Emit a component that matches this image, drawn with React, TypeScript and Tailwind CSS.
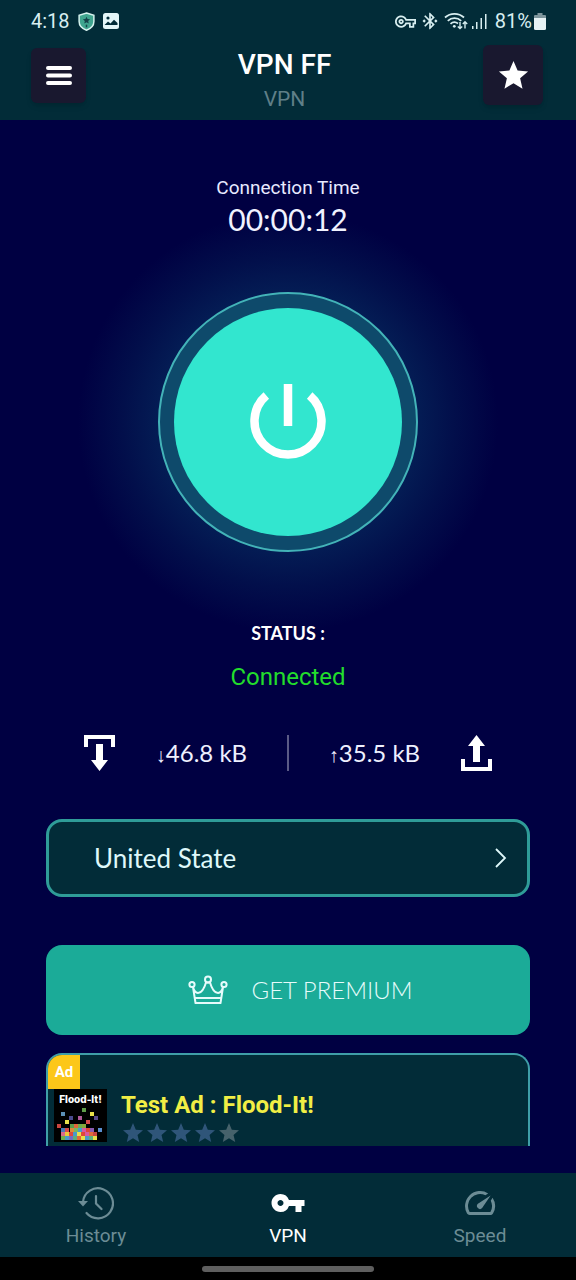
import { MdBluetoothConnected, MdOutlineVpnKey, MdSpeed, MdStar, MdVpnKey } from "react-icons/md";
import { clsx } from "clsx";

const floodPixels: [number, number, string][] = [
  [28, 19, "#5f9e4a"], [7, 23, "#5b8fb5"], [36, 23, "#e8e04a"], [15, 27, "#4a4a8c"], [24, 27, "#b05a9a"],
  [40, 27, "#5a4a8c"], [11, 31, "#e8e04a"], [32, 31, "#d84a4a"], [3, 35, "#c8453f"], [16, 35, "#5f9e4a"],
  [20, 35, "#e0683a"], [24, 35, "#6fae4a"], [28, 35, "#8aa83a"], [7, 39, "#4a7ab8"], [11, 39, "#d84a4a"],
  [16, 39, "#e08a3a"], [20, 39, "#7ab85a"], [24, 39, "#4a9ac8"], [28, 39, "#d85aa0"], [32, 39, "#e0483a"],
  [36, 39, "#8a5ab0"], [44, 39, "#5b8fd0"], [7, 43, "#d86a8a"], [11, 43, "#e8c83a"], [15, 43, "#e0483a"],
  [19, 43, "#4a9ac8"], [23, 43, "#e8e04a"], [27, 43, "#e0483a"], [31, 43, "#d85aa0"], [35, 43, "#e06a3a"],
  [39, 43, "#c8453f"], [7, 47, "#6fae4a"], [11, 47, "#4a9ac8"], [15, 47, "#7a6ac0"], [19, 47, "#5fae7a"],
  [23, 47, "#e0683a"], [27, 47, "#e8e04a"], [31, 47, "#4a9ac8"], [35, 47, "#5fae7a"], [39, 47, "#e8e04a"],
];

function ShieldIcon() {
  return (
    <svg width="17" height="19" viewBox="0 0 16 18">
      <path d="M8 1 15 3.2V9c0 4-3 6.8-7 8.3C4 15.8 1 13 1 9V3.2Z" fill="#3fa58f" stroke="#d5f2ee" strokeWidth="1.4" />
      <path d="m8 4.5 1 2.2 2.4.2-1.8 1.6.5 2.4L8 9.7l-2.1 1.2.5-2.4-1.8-1.6 2.4-.2Z" fill="#14434a" />
      <path d="M7.3 12h1.4v2.5H7.3z" fill="#14434a" />
    </svg>
  );
}

function PictureIcon() {
  return (
    <svg width="16" height="16" viewBox="0 0 16 16">
      <rect width="16" height="16" rx="2.5" fill="#e4f6f8" />
      <circle cx="5" cy="5" r="1.6" fill="#022c38" />
      <path d="M1.5 12 5 8.5 7.5 10.5 11 6.8 14.5 10v2Z" fill="#022c38" />
    </svg>
  );
}

function WifiIcon() {
  return (
    <svg width="24" height="18" viewBox="0 0 24 18" fill="none" stroke="#d8eef0" strokeWidth="1.8">
      <path d="M1 5.5a14 14 0 0 1 19 0M3.8 8.8a10 10 0 0 1 13.4 0M6.5 11.8a6 6 0 0 1 7.5-.4" />
      <circle cx="10.3" cy="14.3" r="1.4" fill="#d8eef0" stroke="none" />
      <path d="M16 10v6.5M13.8 14.4l2.2 2.2 2.2-2.2M21 16.5V10M18.8 12l2.2-2.2 2.2 2.2" strokeWidth="1.4" />
    </svg>
  );
}

function SignalIcon() {
  return (
    <svg width="15" height="16" viewBox="0 0 15 16" fill="#d8eef0">
      <path d="M0 13h1.5v3H0zM4 9h1.5v7H4zM8.5 5H10v11H8.5zM13 1h1.5v15H13z" />
    </svg>
  );
}

function BatteryIcon() {
  return (
    <svg width="12" height="17" viewBox="0 0 12 17">
      <path d="M3.5 0h5v2H11a1 1 0 0 1 1 1v2H0V3a1 1 0 0 1 1-1h2.5z" fill="#7e959c" />
      <path d="M0 5h12v10.5a1.5 1.5 0 0 1-1.5 1.5h-9A1.5 1.5 0 0 1 0 15.5z" fill="#e8f3f5" />
    </svg>
  );
}

function StatusBar() {
  return (
    <div className="flex h-10 items-center justify-between pl-[31px] pr-[30px] pt-0.5 text-xl text-[#d8eef0]">
      <div className="flex items-center gap-2">
        <span>4:18</span>
        <ShieldIcon />
        <PictureIcon />
      </div>
      <div className="flex items-center gap-1">
        <MdOutlineVpnKey size={21} />
        <MdBluetoothConnected size={20} />
        <WifiIcon />
        <SignalIcon />
        <div className="flex items-center gap-0.5 pl-1">
          <span>81%</span>
          <BatteryIcon />
        </div>
      </div>
    </div>
  );
}

function Header() {
  return (
    <header className="bg-[#022c38]">
      <StatusBar />
      <div className="flex h-20 items-start justify-between pl-[31px] pr-[33px] pt-[5px]">
        <button
          aria-label="Menu"
          className="mt-[3px] flex size-[55px] items-center justify-center rounded-md bg-[#19182f] shadow-md"
        >
          <svg width="28" height="20" viewBox="0 0 28 20" stroke="#fff" strokeWidth="4" strokeLinecap="round">
            <path d="M3 2h22M3 9.5h22M3 17h22" />
          </svg>
        </button>
        <div className="flex flex-col items-center">
          <h1 className="text-[28px] font-medium leading-10 text-white">VPN FF</h1>
          <p className="text-[21px] leading-7 text-[#5f7f88]">VPN</p>
        </div>
        <button
          aria-label="Rate"
          className="flex size-[60px] items-center justify-center rounded-md bg-[#19182f] text-white shadow-md"
        >
          <MdStar size={35} />
        </button>
      </div>
    </header>
  );
}

function PowerButton() {
  return (
    <button
      aria-label="Disconnect"
      className="mt-[54px] flex size-[260px] items-center justify-center rounded-full border-2 border-[#43b3b8] bg-[#0e4a6b]"
    >
      <span className="flex size-[228px] items-center justify-center rounded-full bg-[#32e6cf]">
        <svg width="78" height="78" viewBox="0 0 78 78" fill="none" stroke="#fff" strokeWidth="8.5">
          <path d="M39 1v42M17.3 12.6a33.5 33.5 0 1 0 43.4 0" />
        </svg>
      </span>
    </button>
  );
}

function Traffic() {
  return (
    <div className="mt-[42px] flex h-9 w-full items-center justify-between px-[83px] font-['Lato',sans-serif] text-2xl text-[#eef0ff]">
      <svg width="33" height="36" viewBox="0 0 33 36" fill="#fff">
        <path d="M1 0h31v12h-4V4H5v8H1z" />
        <path d="M13 9h7v16h5l-8.5 11L8 25h5z" />
      </svg>
      <span>
        <span className="font-['Liberation_Sans',sans-serif] text-xl">↓</span>
        46.8 kB
      </span>
      <span className="h-9 w-0.5 bg-[#5a5a86]" />
      <span>
        <span className="font-['Liberation_Sans',sans-serif] text-xl">↑</span>
        35.5 kB
      </span>
      <svg width="33" height="36" viewBox="0 0 33 36" fill="#fff">
        <path d="M1 24h4v8h23v-8h4v12H1z" />
        <path d="M13 27V11H8L16.5 0 25 11h-5v16z" />
      </svg>
    </div>
  );
}

function CrownIcon() {
  return (
    <svg width="40" height="30" viewBox="0 0 40 30" fill="none" stroke="#e6fbfb" strokeWidth="2" strokeLinejoin="round">
      <circle cx="20" cy="4.5" r="3" />
      <circle cx="4" cy="9.5" r="2.6" />
      <circle cx="36" cy="9.5" r="2.6" />
      <path d="M5 12 7.5 28h25L35 12c-2 8-9 9-13-4.5h-4C14 21 7 20 5 12ZM7 23h26" />
    </svg>
  );
}

function AdCard() {
  return (
    <section className="mt-[18px] h-[93px] w-full overflow-hidden rounded-t-2xl border-2 border-b-0 border-[#3f9ea8] bg-[#022c38]">
      <div className="flex h-[34px] w-8 items-center justify-center bg-[#fcc719] text-[15px] font-bold text-white">
        Ad
      </div>
      <div className="flex gap-3.5 pl-1.5">
        <div className="grid size-[53px] bg-black text-center">
          <span className="col-start-1 row-start-1 pt-1 font-['Inter',sans-serif] text-[10px] font-extrabold leading-3 text-white">
            Flood-It!
          </span>
          <svg className="col-start-1 row-start-1" width="53" height="53" viewBox="0 0 53 53">
            {floodPixels.map(([x, y, fill]) => (
              <rect key={`${x}-${y}`} x={x} y={y} width="4" height="4" fill={fill} />
            ))}
          </svg>
        </div>
        <div>
          <h2 className="text-2xl font-bold leading-8 text-[#f1ee45]">Test Ad : Flood-It!</h2>
          <div className="flex" aria-label="4 of 5 stars">
            {[1, 2, 3, 4, 5].map((n) => (
              <MdStar key={n} size={24} className={n < 5 ? "text-[#2f5579]" : "text-[#46626b]"} />
            ))}
          </div>
        </div>
      </div>
    </section>
  );
}

function HistoryIcon() {
  return (
    <svg width="36" height="36" viewBox="0 0 36 36" fill="none" stroke="currentColor" strokeWidth="2.2">
      <path d="M5 17A15 15 0 1 1 8.5 28M18 11v7.5l5.5 5.5" strokeLinecap="round" />
      <path d="M0 16h10l-5 5.5z" fill="currentColor" stroke="none" />
    </svg>
  );
}

const tabs = [
  { label: "History", icon: <HistoryIcon /> },
  { label: "VPN", icon: <MdVpnKey size={36} />, active: true },
  { label: "Speed", icon: <MdSpeed size={36} /> },
];

function BottomNav() {
  return (
    <nav className="grid h-[84px] grid-cols-3 bg-[#022c38]">
      {tabs.map((tab) => (
        <a
          key={tab.label}
          href="#"
          className={clsx(
            "flex flex-col items-center pt-3 text-[19px] leading-[30px]",
            tab.active ? "text-white" : "text-[#6c8c95]"
          )}
        >
          {tab.icon}
          <span>{tab.label}</span>
        </a>
      ))}
    </nav>
  );
}

export default function App() {
  return (
    <div className="flex min-h-screen flex-col bg-[#000042] font-['Roboto',sans-serif]">
      <Header />
      <main className="flex grow flex-col items-center bg-[radial-gradient(circle_at_50%_302px,#04235a_0,#041c54_130px,#020f4b_165px,#000042_210px)]">
        <p className="mt-14 text-[19px] leading-6 text-[#e8eaff]">Connection Time</p>
        <p className="font-['Lato',sans-serif] text-[30px] leading-[38px] text-[#f0f2ff]">00:00:12</p>
        <PowerButton />
        <p className="mt-[67px] font-['Lato',sans-serif] text-lg font-bold leading-7 text-white">STATUS :</p>
        <p className="mt-3.5 text-2xl leading-8 text-[#22dd2c]">Connected</p>
        <Traffic />
        <div className="mt-12 flex w-full flex-col px-[46px]">
          <button className="flex h-[78px] items-center justify-between rounded-2xl border-3 border-[#2f9c98] bg-[#022c38] pl-[45px] pr-5 font-['Lato',sans-serif] text-[26px] text-[#dff8fa]">
            <span>United State</span>
            <svg width="12" height="20" viewBox="0 0 12 20" fill="none" stroke="currentColor" strokeWidth="1.8">
              <path d="m1 1 9 9-9 9" />
            </svg>
          </button>
          <button className="mt-12 flex h-[90px] items-center justify-center gap-6 rounded-2xl bg-[#1bab98] pl-6 font-['Lato',sans-serif] text-2xl font-light text-[#e6fbfb]">
            <CrownIcon />
            <span>GET PREMIUM</span>
          </button>
          <AdCard />
        </div>
      </main>
      <BottomNav />
      <div className="flex h-[23px] items-center justify-center bg-black">
        <span className="h-1.5 w-[172px] rounded-full bg-[#5f5f5f]" />
      </div>
    </div>
  );
}
